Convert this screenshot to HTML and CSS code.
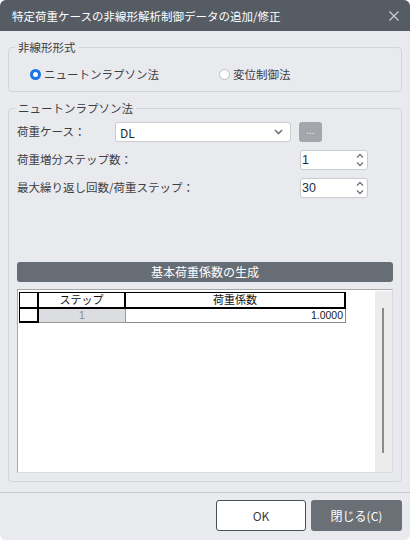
FILE: index.html
```html
<!DOCTYPE html>
<html lang="ja">
<head>
<meta charset="utf-8">
<title>特定荷重ケースの非線形解析制御データの追加/修正</title>
<link rel="stylesheet" href="styles.css">
</head>
<body>
<div class="window">
  <header class="titlebar">
    <span class="title">特定荷重ケースの非線形解析制御データの追加/修正</span>
    <svg class="close" width="10" height="10" viewBox="0 0 10 10"><path d="M0.5 0.5L9.5 9.5M9.5 0.5L0.5 9.5" stroke="#cfd2d6" stroke-width="1.1" fill="none"/></svg>
  </header>

  <main class="content">
    <fieldset class="group group-method">
      <legend>非線形形式</legend>
      <div class="radios">
        <label class="radio radio-first"><span class="dot checked"></span>ニュートンラプソン法</label>
        <label class="radio"><span class="dot"></span>変位制御法</label>
      </div>
    </fieldset>

    <fieldset class="group group-nr">
      <legend>ニュートンラプソン法</legend>
      <div class="row">
        <span class="label label-case">荷重ケース：</span>
        <div class="select">
          <span>DL</span>
          <svg class="chev" width="9" height="6" viewBox="0 0 9 6"><path d="M1 1L4.5 4.5L8 1" stroke="#707378" stroke-width="1.6" fill="none"/></svg>
        </div>
        <button class="more" type="button">...</button>
      </div>
      <div class="row">
        <span class="label label-spin">荷重増分ステップ数：</span>
        <div class="spin">
          <span class="value">1</span>
          <svg class="arrows" width="8" height="14" viewBox="0 0 8 14"><path d="M1 4.5L4 1.5L7 4.5M1 9.5L4 12.5L7 9.5" stroke="#707378" stroke-width="1.3" fill="none"/></svg>
        </div>
      </div>
      <div class="row">
        <span class="label label-spin">最大繰り返し回数/荷重ステップ：</span>
        <div class="spin">
          <span class="value">30</span>
          <svg class="arrows" width="8" height="14" viewBox="0 0 8 14"><path d="M1 4.5L4 1.5L7 4.5M1 9.5L4 12.5L7 9.5" stroke="#707378" stroke-width="1.3" fill="none"/></svg>
        </div>
      </div>

      <div class="bar">基本荷重係数の生成</div>
      <div class="grid-panel">
        <div class="sheet">
          <div class="cell hd corner"></div>
          <div class="cell hd">ステップ</div>
          <div class="cell hd">荷重係数</div>
          <div class="cell rowhd"></div>
          <div class="cell step">1</div>
          <div class="cell num">1.0000</div>
        </div>
        <div class="track"><div class="thumb"></div></div>
      </div>
    </fieldset>
  </main>

  <footer class="footer">
    <button class="btn btn-ok" type="button">OK</button>
    <button class="btn btn-close" type="button">閉じる(C)</button>
  </footer>
</div>
</body>
</html>
```

FILE: styles.css
```css
html, body {
  margin: 0;
  background: #ffffff;
}

body {
  font-family: "Noto Sans CJK JP", "Noto Sans", sans-serif;
  color: #3a3b3d;
}

.window {
  width: 410px;
  height: 540px;
  background: #e9eaee;
  border-radius: 6px;
  overflow: hidden;
  display: flex;
  flex-direction: column;
}

/* title bar */
.titlebar {
  flex: none;
  height: 31px;
  box-sizing: border-box;
  padding: 0 11px 0 12px;
  background: #565c64;
  color: #ffffff;
  display: flex;
  align-items: center;
  justify-content: space-between;
}

.title {
  font-size: 11.5px;
  line-height: 16px;
}

.close {
  display: block;
}

/* dialog body */
.content {
  flex: 1;
  padding: 8px 8px 0;
}

.group {
  margin: 0;
  min-width: 0;
  border: 1px solid #d2d4d8;
  border-radius: 4px;
  padding: 0 8px 7px 8px;
}

.group legend {
  padding: 0 3px;
  margin-left: -2px;
  font-size: 11.5px;
  line-height: 16px;
  color: #3c3d40;
}

.group-nr {
  margin-top: 8px;
  padding-bottom: 8px;
}

/* radio buttons */
.radios {
  display: flex;
  align-items: center;
  height: 20px;
  margin-top: 9px;
  padding-left: 13px;
}

.radio {
  display: flex;
  align-items: center;
  font-size: 11.5px;
  line-height: 16px;
  color: #3f4043;
}

.radio-first {
  width: 189px;
}

.dot {
  width: 11px;
  height: 11px;
  box-sizing: border-box;
  border-radius: 50%;
  border: 1px solid #b9bbbf;
  background: #ffffff;
  margin-right: 3px;
}

.dot.checked {
  border: 3.5px solid #1a73e8;
  background: #ffffff;
}

/* form rows */
.row {
  display: flex;
  align-items: center;
  height: 20px;
  margin-top: 8px;
}

.group-nr legend + .row {
  margin-top: 6px;
}

.label {
  flex: none;
  font-size: 11.5px;
  line-height: 16px;
  color: #3f4043;
  margin-top: -2px;
}

.label-case {
  width: 98px;
}

.label-spin {
  width: 283px;
}

.select {
  width: 176px;
  height: 20px;
  box-sizing: border-box;
  border: 1px solid #c9cbcf;
  border-radius: 3px;
  background: #ffffff;
  display: flex;
  align-items: center;
  justify-content: space-between;
  padding: 0 7px 0 4px;
  font-size: 12px;
  color: #2c2d30;
}

.more {
  margin-left: 8px;
  width: 23px;
  height: 20px;
  border: none;
  border-radius: 3px;
  background: #a3a6ac;
  color: #f4f5f6;
  font-family: "Liberation Sans", sans-serif;
  font-size: 10px;
  padding: 0 0 3px;
}

.spin {
  width: 68px;
  height: 20px;
  box-sizing: border-box;
  border: 1px solid #c9cbcf;
  border-radius: 3px;
  background: #ffffff;
  display: flex;
  align-items: center;
  justify-content: space-between;
  padding: 0 3px 0 1px;
}

.spin .value {
  font-family: "Liberation Sans", sans-serif;
  font-size: 12.5px;
  color: #1f2f4a;
}

/* load factor table */
.bar {
  margin-top: 64px;
  height: 20px;
  border-radius: 3px;
  background: #676d74;
  color: #ffffff;
  font-size: 12px;
  line-height: 20px;
  text-align: center;
}

.grid-panel {
  margin-top: 7px;
  height: 184px;
  box-sizing: border-box;
  border-style: solid;
  border-width: 1px;
  border-color: #a6a9ae #dadce0 #dadce0 #a6a9ae;
  background: #ffffff;
  display: flex;
}

.sheet {
  flex: 1;
  display: grid;
  grid-template-columns: 20px 87px 220px;
  grid-template-rows: 17px 14px;
  align-content: start;
  padding: 2px 0 0 1px;
}

.cell {
  box-sizing: border-box;
  font-size: 11px;
  line-height: 13px;
  text-align: center;
  overflow: hidden;
}

.hd {
  border-top: 1px solid #000;
  border-right: 2px solid #000;
  border-bottom: 2px solid #000;
  color: #111;
}

.corner {
  border-left: 1px solid #000;
}

.rowhd {
  border-left: 1px solid #000;
  border-right: 2px solid #000;
  border-bottom: 2px solid #000;
}

.step {
  background: #dcdde0;
  border-right: 1px solid #9a9a9a;
  border-bottom: 1px solid #9a9a9a;
  color: #8a8b8e;
  font-family: "Liberation Sans", sans-serif;
  font-size: 10.5px;
  line-height: 13px;
}

.num {
  border-right: 1px solid #8a8a8a;
  border-bottom: 1px solid #8a8a8a;
  text-align: right;
  padding-right: 2px;
  font-family: "Liberation Sans", sans-serif;
  font-size: 10.5px;
  line-height: 13px;
  color: #222;
}

.track {
  flex: none;
  width: 17px;
  background: #ececec;
  margin-top: 1px;
}

.thumb {
  width: 2px;
  height: 145px;
  margin: 17px 0 0 7px;
  background: #8a8b8e;
}

/* dialog buttons */
.footer {
  flex: none;
  height: 48px;
  box-sizing: border-box;
  border-top: 1px solid #c6c9cd;
  padding: 7px 8px 0;
  display: flex;
  justify-content: flex-end;
  gap: 5px;
}

.btn {
  height: 31px;
  border-radius: 3px;
  font-family: "Noto Sans CJK JP", "Noto Sans", sans-serif;
  font-size: 12px;
  padding: 0;
}

.btn-ok {
  width: 90px;
  border: 1px solid #4b5057;
  background: #ffffff;
  color: #3a3b3d;
}

.btn-close {
  width: 91px;
  border: none;
  background: #6b7077;
  color: #ffffff;
}
```
